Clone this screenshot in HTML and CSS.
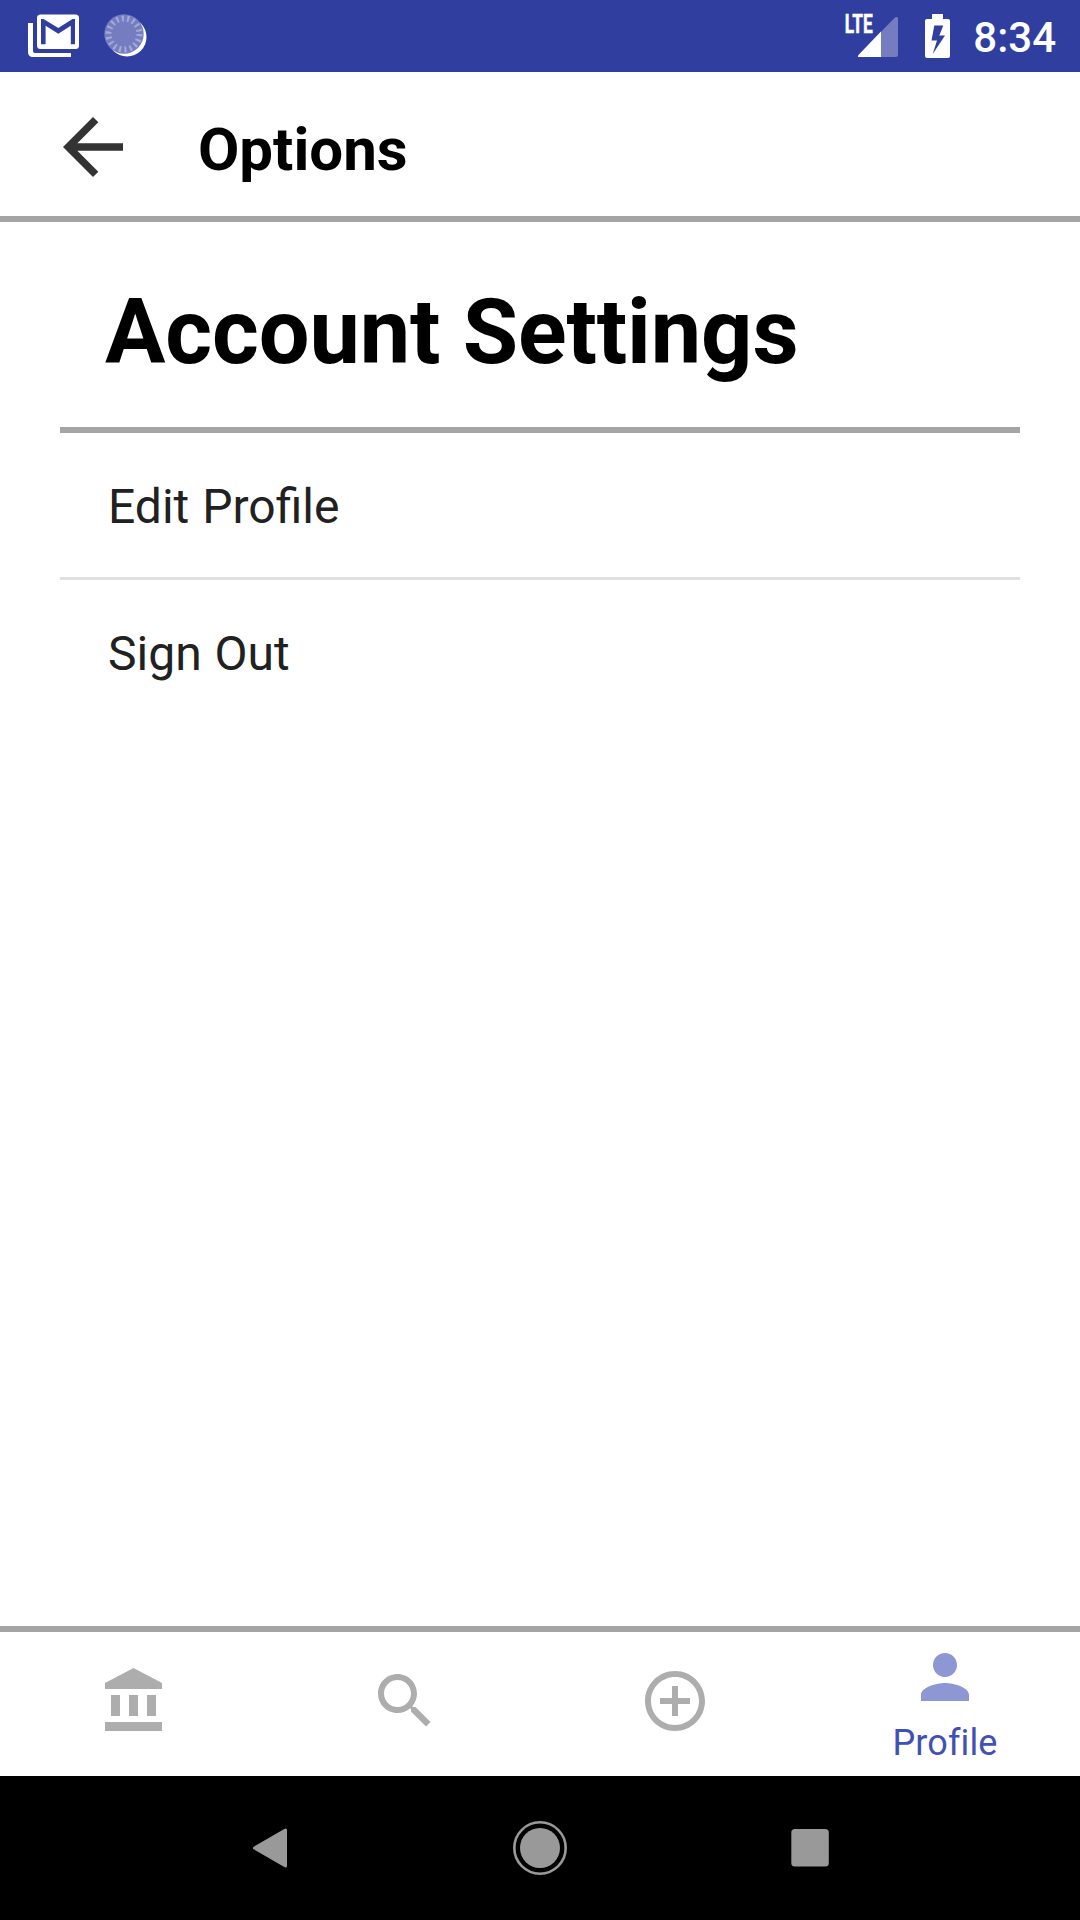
FILE: index.html
```html
<!DOCTYPE html>
<html lang="en">
<head>
<meta charset="utf-8">
<title>Options</title>
<link rel="stylesheet" href="styles.css">
</head>
<body>
<div class="screen">
  <div class="status-bar">
    <svg class="status-mail" width="54" height="46" viewBox="27 13 54 46">
      <path d="M28 23v29q0 5 5 5h38v-4H35q-2 0-2-2V23z" fill="#fff"/>
      <rect x="37" y="14.500" width="42" height="34.500" rx="3.500" fill="#fff"/>
      <path d="M41 19h2.500l14.800 8.900L72.500 19H75v25.300h-4.200V25.800L58.300 33.700 45.600 25.800v18.500H41z" fill="#303f9f"/>
    </svg>
    <svg class="status-sync" width="46" height="46" viewBox="103 13 46 46">
      <circle cx="127" cy="37" r="19.500" fill="#fff"/>
      <circle cx="124" cy="34" r="19.700" fill="#757dc0"/>
      <circle cx="124" cy="34" r="15.500" fill="none" stroke="#a3a9d6" stroke-width="6" stroke-dasharray="2.200 3.210"/>
    </svg>
    <svg class="status-signal" width="58" height="58" viewBox="841 1 58 58">
      <text class="lte" transform="translate(844.700 33.300) scale(.68 1)">LTE</text>
      <path d="M859 57q-2 0-.500-2L895 17.500q3-1.500 3 1V55q0 2-2 2z" fill="#757dc0"/>
      <path d="M859 57q-2 0-.500-2L881 31.500V57z" fill="#fff"/>
    </svg>
    <svg class="status-battery" width="25" height="44" viewBox="925 14 25 44">
      <path d="M932 14h11v5h5q2 0 2 2v35q0 2-2 2h-21q-2 0-2-2V21q0-2 2-2h5z" fill="#fff"/>
      <path d="M934.300 25.500h9l-4 10h5.700L932.700 54l4.300-13.500h-5.500z" fill="#303f9f"/>
    </svg>
    <span class="clock">8:34</span>
  </div>
  <header class="header">
    <svg class="back" width="90" height="90" viewBox="0 0 24 24" fill="#333"><path d="M20 11H7.830l5.590-5.590L12 4l-8 8 8 8 1.410-1.410L7.830 13H20v-2z"/></svg>
    <h1 class="header-title">Options</h1>
  </header>
  <main class="content">
    <h2 class="section-title">Account Settings</h2>
    <div class="option">Edit Profile</div>
    <div class="option last">Sign Out</div>
  </main>
  <nav class="tabs">
    <div class="tab"><svg class="tab-icon" viewBox="0 0 24 24"><path d="M4 10v7h3v-7H4zm6 0v7h3v-7h-3zM2 22h19v-3H2v3zm14-12v7h3v-7h-3zM11.500 1L2 6v2h19V6l-9.500-5z"/></svg></div>
    <div class="tab"><svg class="tab-icon" viewBox="0 0 24 24"><path d="M15.500 14h-.790l-.280-.270C15.410 12.590 16 11.110 16 9.500 16 5.910 13.090 3 9.500 3S3 5.910 3 9.500 5.910 16 9.500 16c1.610 0 3.090-.590 4.230-1.570l.270.280v.790l5 4.990L20.490 19l-4.990-5zm-6 0C7.010 14 5 11.990 5 9.500S7.010 5 9.500 5 14 7.010 14 9.500 11.990 14 9.500 14z"/></svg></div>
    <div class="tab"><svg class="tab-icon" viewBox="0 0 24 24"><path d="M13 7h-2v4H7v2h4v4h2v-4h4v-2h-4V7zm-1-5C6.480 2 2 6.480 2 12s4.480 10 10 10 10-4.480 10-10S17.520 2 12 2zm0 18c-4.410 0-8-3.590-8-8s3.590-8 8-8 8 3.590 8 8-3.590 8-8 8z"/></svg></div>
    <div class="tab active"><svg class="tab-icon" viewBox="0 0 24 24"><path d="M12 12c2.210 0 4-1.790 4-4s-1.790-4-4-4-4 1.790-4 4 1.790 4 4 4zm0 2c-2.670 0-8 1.340-8 4v2h16v-2c0-2.660-5.330-4-8-4z"/></svg><span class="tab-label">Profile</span></div>
  </nav>
  <div class="system-nav">
    <svg width="60" height="60" viewBox="-30 -30 60 60"><path d="M15.500-18v36L-15.500 0z" fill="#999" stroke="#999" stroke-width="3" stroke-linejoin="round"/></svg>
    <svg width="60" height="60" viewBox="-30 -30 60 60"><circle r="20" fill="#999"/><circle r="25.700" fill="none" stroke="#999" stroke-width="2.600"/></svg>
    <svg width="60" height="60" viewBox="-30 -30 60 60"><rect x="-18.700" y="-18.900" width="37.500" height="37.500" rx="3.500" fill="#999"/></svg>
  </div>
</div>
</body>
</html>
```
FILE: styles.css
```css
* { box-sizing: border-box; }
body { margin: 0; background: #fff; font-family: Roboto, sans-serif; }
svg { display: block; flex: none; }
.screen { width: 1080px; height: 1920px; display: flex; flex-direction: column; overflow: hidden; }
.status-bar { height: 72px; flex: none; background: #303f9f; color: #fff; display: flex; align-items: flex-start; padding: 13px 24px 0 27px; }
.status-sync { margin-left: 22px; }
.status-signal { margin: -12px 0 0 auto; }
.status-battery { margin: 1px 23px 0 26px; }
.lte { font-size: 25.500px; font-weight: 700; fill: #fff; stroke: #fff; stroke-width: .5px; }
.clock { font-size: 42px; font-weight: 500; line-height: 48px; margin-top: 1px; }
.header { height: 150px; flex: none; border-bottom: 6px solid #a5a5a5; display: flex; align-items: center; padding-left: 48px; }
.back { margin-top: 6px; }
.header-title { margin: 12px 0 0 60px; font-size: 60px; line-height: 70px; font-weight: 700; color: #000; }
.content { flex: 1; padding: 0 60px; }
.section-title { margin: 0; height: 211px; padding: 58px 0 0 45px; font-size: 90px; line-height: 106px; font-weight: 700; letter-spacing: -.13px; color: #000; border-bottom: 6px solid #a5a5a5; }
.option { height: 147px; padding-left: 48px; font-size: 48px; line-height: 148px; word-spacing: 1px; color: #212121; border-bottom: 3px solid #e0e0e0; }
.option.last { border-bottom: 0; }
.tabs { height: 150px; flex: none; border-top: 6px solid #a5a5a5; display: grid; grid-template-columns: repeat(4, 1fr); }
.tab { display: flex; flex-direction: column; align-items: center; padding-top: 33px; }
.tab-icon { width: 72px; height: 72px; fill: #adadad; }
.tab.active { padding-top: 9px; }
.active .tab-icon { fill: #8c97d3; }
.tab-label { margin-top: 9px; font-size: 36px; line-height: 42px; letter-spacing: .1px; color: #3f51b5; font-variant-ligatures: common-ligatures; }
.system-nav { height: 144px; flex: none; background: #000; display: flex; align-items: center; justify-content: space-between; padding: 0 240px; }
```
